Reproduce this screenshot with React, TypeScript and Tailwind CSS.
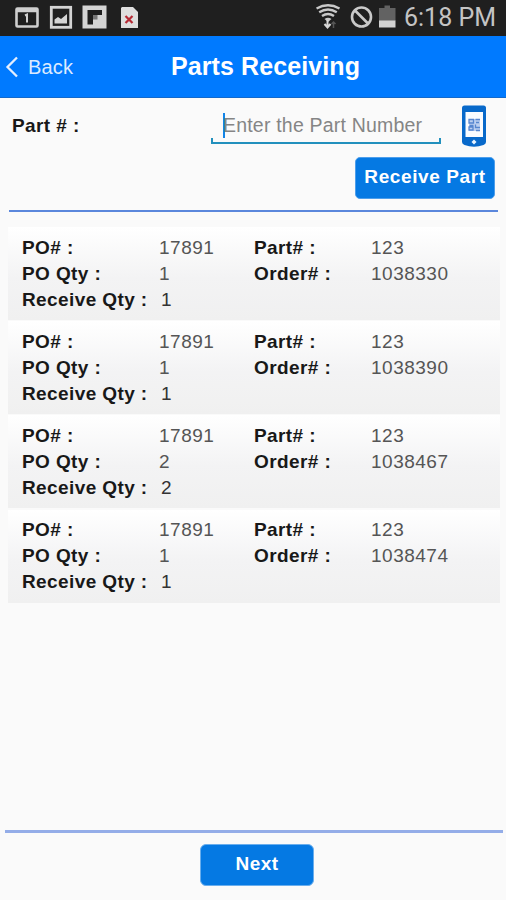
type Receipt = {
  po: string;
  part: string;
  poQty: number;
  order: string;
  receiveQty: number;
};

const receipts: Receipt[] = [
  { po: "17891", part: "123", poQty: 1, order: "1038330", receiveQty: 1 },
  { po: "17891", part: "123", poQty: 1, order: "1038390", receiveQty: 1 },
  { po: "17891", part: "123", poQty: 2, order: "1038467", receiveQty: 2 },
  { po: "17891", part: "123", poQty: 1, order: "1038474", receiveQty: 1 },
];

function StatusBar() {
  return (
    <div className="flex h-9 shrink-0 items-center bg-[#1f1f1f] pr-[8px]">
      <svg width="160" height="36" viewBox="0 0 160 36" fill="none">
        {/* calendar */}
        <rect x="16.5" y="8.5" width="21" height="18" rx="1" stroke="#cfcfcf" strokeWidth="2.6" />
        <path d="M16 10.5h22" stroke="#cfcfcf" strokeWidth="3.5" />
        <path d="M25 15.5l2-1v8" stroke="#cfcfcf" strokeWidth="2" />
        {/* gallery */}
        <rect x="51.3" y="7.3" width="19.4" height="20" stroke="#d4d4d4" strokeWidth="2.8" />
        <path d="M54.5 23.5v-4l3.5-2.5 3 2 6-5v9.5z" fill="#d4d4d4" />
        {/* flipboard */}
        <path d="M82.5 5.5h24v23h-24z" fill="#d4d4d4" />
        <path d="M87.5 10H102v5h-9v9.5h-5.5z" fill="#1f1f1f" />
        <path d="M93 15h4.5v4.5H93z" fill="#777" />
        {/* sim card */}
        <path d="M122 7h11l5 5v16h-17V8z" fill="#dedede" />
        <path d="M125.5 16l7 7m0-7l-7 7" stroke="#b52a35" strokeWidth="2.2" />
      </svg>
      <svg className="ml-auto" width="84" height="36" viewBox="0 0 84 36" fill="none">
        {/* wifi */}
        <g stroke="#c9c9c9" strokeWidth="2.4">
          <path d="M.5 8.5q11.5-6.500 23 0" />
          <path d="M3.2 12.3q8.8-5.500 17.600 0" />
          <path d="M6 16q6-4 12 0" />
        </g>
        <path d="M8.5 19q3.500-2.500 7 0L12 22z" fill="#c9c9c9" />
        <path d="M11.5 20v7.500m-3-3.500l3 3.500 3-3.500" stroke="#d8d8d8" strokeWidth="2" />
        <path d="M17.5 28v-6m-2 2l2-2 2 2" stroke="#555" strokeWidth="1.5" />
        {/* blocked */}
        <circle cx="45.5" cy="17" r="9.5" stroke="#c9c9c9" strokeWidth="2.6" />
        <path d="M39 10.5l13 13" stroke="#c9c9c9" strokeWidth="2.6" />
        {/* battery */}
        <path d="M68.5 5.500h5.500v2.500h5.500v13H63V8h5.500z" fill="#626262" />
        <path d="M63 20.500h16.500v7H63z" fill="#d2d2d2" />
      </svg>
      <span className="ml-[4px] w-[94px] whitespace-nowrap font-[Roboto] text-[25px] leading-9 text-[#c4c4c4]">
        6:18 PM
      </span>
    </div>
  );
}

function Header() {
  return (
    <header className="grid h-[62px] shrink-0 grid-cols-[171px_1fr] items-center border-b border-[#1269cc] bg-[#007aff] text-white">
      <button className="flex items-center text-left">
        <svg className="ml-[5px]" width="15" height="22" viewBox="0 0 15 22" fill="none">
          <path d="M12 1.5L2.5 11l9.5 9.500" stroke="#e4efff" strokeWidth="2.3" />
        </svg>
        <span className="ml-2 text-[20px] tracking-[0.2px] text-[#dceaff]">Back</span>
      </button>
      <h1 className="pt-[1px] text-[25px] font-bold tracking-[0.1px]">Parts Receiving</h1>
    </header>
  );
}

function ScanIcon() {
  return (
    <svg width="26" height="43" viewBox="0 0 26 43">
      <path d="M3.5 0.5h19q2.500 0 2.500 2.500v34q0 2-2.500 3-9.500 3.500-19 0Q1 39 1 37V3Q1 0.500 3.500 0.500z" fill="#0869ca" />
      <path d="M4.5 7H22v25H4.500z" fill="#fafcff" />
      <path d="M8 14h11v12H8z" fill="#bccff0" />
      <path
        d="M8 14.5h4.500v3.500H8zM14.500 14.500H19M15 17.500h3M8.500 20.500h4m2-1v3H19M8 25v-3h4v3zm7 .5h4"
        fill="none"
        stroke="#5786cf"
        strokeWidth="1.3"
      />
      <path d="M13 34.500l2.500 2.500-2.500 2.500-2.500-2.500z" fill="#e8f3ff" />
    </svg>
  );
}

function ReceiptCard({ po, part, poQty, order, receiveQty }: Receipt) {
  return (
    <div className="grid h-[93px] shrink-0 grid-cols-[137px_95px_117px_1fr] grid-rows-[26px_26px_26px] bg-linear-to-b from-white via-[#f3f3f4] via-55% to-[#f0f0f0] pl-[14px] pt-[7.6px] text-[19px] leading-[26px] tracking-[0.5px]">
      <b className="tracking-[0.4px]">PO# :</b>
      <span className="text-[#555]">{po}</span>
      <b className="tracking-[0.4px]">Part# :</b>
      <span className="text-[#555]">{part}</span>
      <b className="tracking-[0.4px]">PO Qty :</b>
      <span className="text-[#555]">{poQty}</span>
      <b className="tracking-[0.4px]">Order# :</b>
      <span className="text-[#555]">{order}</span>
      <b className="whitespace-nowrap tracking-[0.4px]">Receive Qty :</b>
      <span className="pl-[2px] text-[#333]">{receiveQty}</span>
    </div>
  );
}

export default function App() {
  return (
    <div className="flex h-[900px] w-[506px] flex-col overflow-hidden bg-[#fafafa] font-['Liberation_Sans',sans-serif] text-[#181818]">
      <StatusBar />
      <Header />

      <section className="mr-2 ml-[9px] flex h-[114px] shrink-0 flex-col border-b-2 border-[#5b87dc]">
        <div className="flex h-[59px]">
          <label className="w-[202px] pt-[15px] pl-[3px] text-[19px] leading-[26px] font-bold tracking-[0.4px]">
            Part # :
          </label>
          <div className="flex w-[230px] flex-col">
            <div className="mt-[14px] flex h-[26px] items-center">
              <span className="ml-[12px] h-[25px] w-[2px] bg-[#1284e8]" />
              <span className="-ml-[2px] pt-[1px] whitespace-nowrap text-[19.5px] tracking-[0.2px] text-[#858585]">
                Enter the Part Number
              </span>
            </div>
            <div className="h-[6px] border-x-2 border-b-2 border-[#2290bd]" />
          </div>
          <div className="mt-[7px] ml-[20px]">
            <ScanIcon />
          </div>
        </div>
        <button className="mr-[3px] h-[42px] w-[140px] self-end rounded-[5px] border border-[#4d9eeb] bg-[#0579e3] pb-[2px] text-[19px] font-bold tracking-[0.6px] whitespace-nowrap text-white">
          Receive Part
        </button>
      </section>

      <main className="mt-[15px] mr-[6px] ml-2 flex flex-1 flex-col gap-[1.2px]">
        {receipts.map((receipt) => (
          <ReceiptCard key={receipt.order} {...receipt} />
        ))}
      </main>

      <footer className="mr-[3px] ml-[5px] flex h-[70px] shrink-0 flex-col items-center border-t-[3px] border-[#94ade8]">
        <button className="mt-[11px] ml-[6px] h-[42px] w-[114px] rounded-[6px] border border-[#6aaeed] bg-[#0579e3] pb-[2px] text-[19px] font-bold tracking-[0.4px] text-white">
          Next
        </button>
      </footer>
    </div>
  );
}
